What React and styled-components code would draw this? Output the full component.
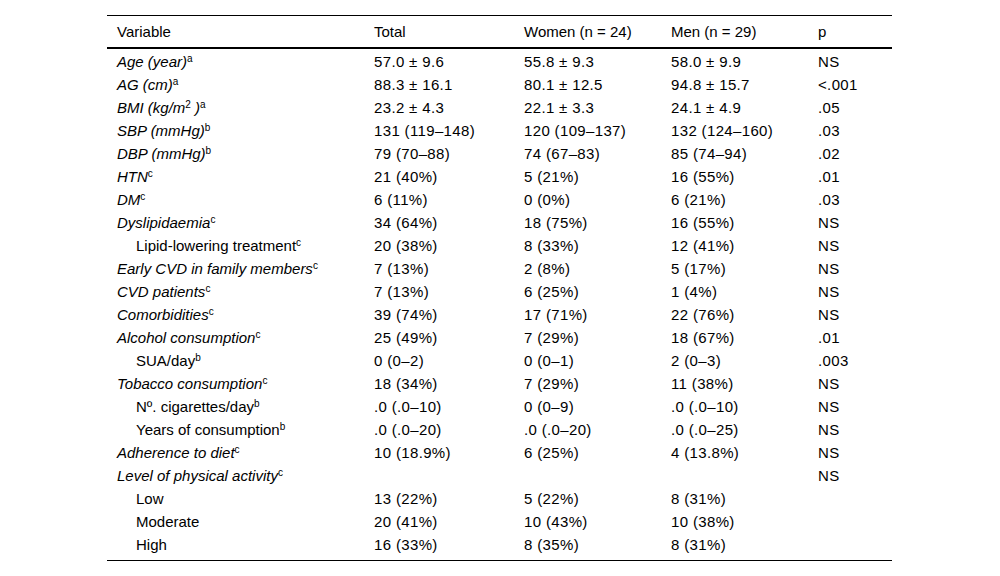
import React from 'react'
import styled, { createGlobalStyle } from 'styled-components'

const GlobalStyle = createGlobalStyle`
  body {
    margin: 0;
    background: #ffffff;
    font-family: "Liberation Sans", Arial, sans-serif;
    color: #000000;
  }
`

const Page = styled.div`
  padding: 15px 0 0 107px;
`

const Table = styled.div`
  width: 785px;
  display: grid;
  grid-template-columns: 257px 150px 147px 147px 84px;
  font-size: 15px;
  border-top: 1px solid #000;
  border-bottom: 1px solid #000;
  padding-bottom: 4px;
`

const HeadCell = styled.div`
  height: 31px;
  line-height: 31px;
  padding-left: 10px;
  border-bottom: 2px solid #000;
  margin-bottom: 1px;
  white-space: nowrap;
`

const Cell = styled.div`
  height: 23px;
  line-height: 23px;
  padding-left: ${(p) => (p.$indent ? 29 : 10)}px;
  font-style: ${(p) => (p.$italic ? 'italic' : 'normal')};
  letter-spacing: ${(p) => (p.$num ? '0.35px' : '0')};
  white-space: nowrap;
`

const Sup = styled.sup`
  font-size: 10px;
  font-style: normal;
  line-height: 0;
  vertical-align: 5px;
`

const rows = [
  ['Age (year)', 'a', true, false, '57.0 ± 9.6', '55.8 ± 9.3', '58.0 ± 9.9', 'NS'],
  ['AG (cm)', 'a', true, false, '88.3 ± 16.1', '80.1 ± 12.5', '94.8 ± 15.7', '<.001'],
  ['BMI', 'a', true, false, '23.2 ± 4.3', '22.1 ± 3.3', '24.1 ± 4.9', '.05'],
  ['SBP (mmHg)', 'b', true, false, '131 (119–148)', '120 (109–137)', '132 (124–160)', '.03'],
  ['DBP (mmHg)', 'b', true, false, '79 (70–88)', '74 (67–83)', '85 (74–94)', '.02'],
  ['HTN', 'c', true, false, '21 (40%)', '5 (21%)', '16 (55%)', '.01'],
  ['DM', 'c', true, false, '6 (11%)', '0 (0%)', '6 (21%)', '.03'],
  ['Dyslipidaemia', 'c', true, false, '34 (64%)', '18 (75%)', '16 (55%)', 'NS'],
  ['Lipid-lowering treatment', 'c', false, true, '20 (38%)', '8 (33%)', '12 (41%)', 'NS'],
  ['Early CVD in family members', 'c', true, false, '7 (13%)', '2 (8%)', '5 (17%)', 'NS'],
  ['CVD patients', 'c', true, false, '7 (13%)', '6 (25%)', '1 (4%)', 'NS'],
  ['Comorbidities', 'c', true, false, '39 (74%)', '17 (71%)', '22 (76%)', 'NS'],
  ['Alcohol consumption', 'c', true, false, '25 (49%)', '7 (29%)', '18 (67%)', '.01'],
  ['SUA/day', 'b', false, true, '0 (0–2)', '0 (0–1)', '2 (0–3)', '.003'],
  ['Tobacco consumption', 'c', true, false, '18 (34%)', '7 (29%)', '11 (38%)', 'NS'],
  ['Nº. cigarettes/day', 'b', false, true, '.0 (.0–10)', '0 (0–9)', '.0 (.0–10)', 'NS'],
  ['Years of consumption', 'b', false, true, '.0 (.0–20)', '.0 (.0–20)', '.0 (.0–25)', 'NS'],
  ['Adherence to diet', 'c', true, false, '10 (18.9%)', '6 (25%)', '4 (13.8%)', 'NS'],
  ['Level of physical activity', 'c', true, false, '', '', '', 'NS'],
  ['Low', '', false, true, '13 (22%)', '5 (22%)', '8 (31%)', ''],
  ['Moderate', '', false, true, '20 (41%)', '10 (43%)', '10 (38%)', ''],
  ['High', '', false, true, '16 (33%)', '8 (35%)', '8 (31%)', ''],
]

const Label = ({ name, note }) => {
  if (name === 'BMI') {
    return (
      <>
        BMI (kg/m<Sup>2</Sup> )<Sup>{note}</Sup>
      </>
    )
  }
  return (
    <>
      {name}
      {note && <Sup>{note}</Sup>}
    </>
  )
}

const App = () => {
  return (
    <Page>
      <GlobalStyle />
      <Table>
        <HeadCell>Variable</HeadCell>
        <HeadCell>Total</HeadCell>
        <HeadCell>Women (n = 24)</HeadCell>
        <HeadCell>Men (n = 29)</HeadCell>
        <HeadCell>p</HeadCell>
        {rows.map(([name, note, italic, indent, total, women, men, p]) => (
          <React.Fragment key={name}>
            <Cell $italic={italic} $indent={indent}>
              <Label name={name} note={note} />
            </Cell>
            <Cell $num>{total}</Cell>
            <Cell $num>{women}</Cell>
            <Cell $num>{men}</Cell>
            <Cell $num>{p}</Cell>
          </React.Fragment>
        ))}
      </Table>
    </Page>
  )
}

export default App
